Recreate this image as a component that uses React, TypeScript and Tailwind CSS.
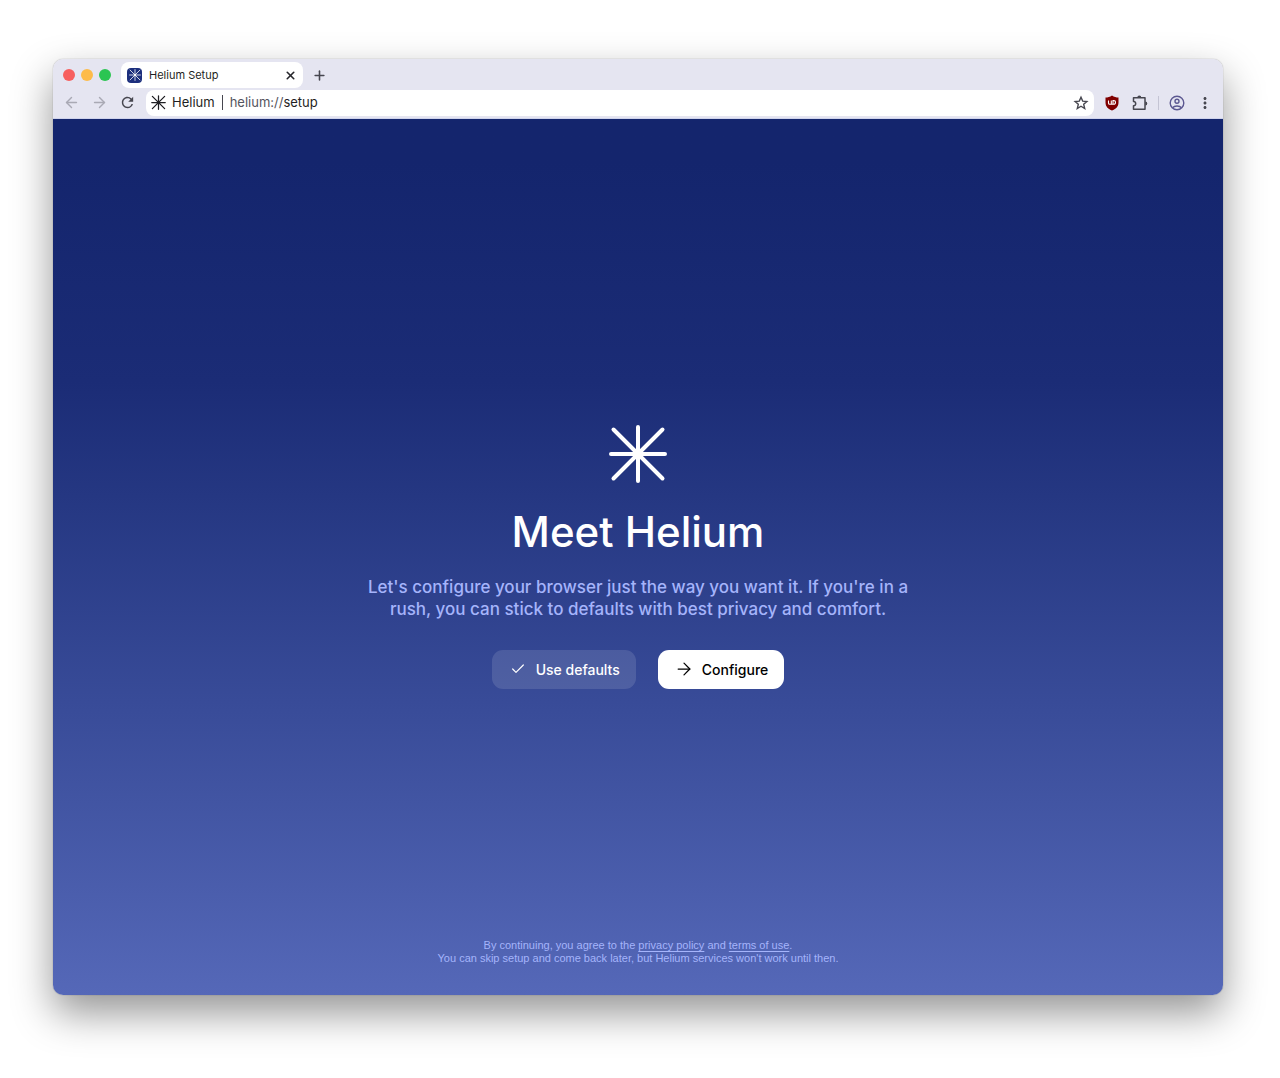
import React from "react";
import { ArrowLeft, ArrowRight, Check, Plus, X } from "lucide-react";
import { MdRefresh, MdMoreVert } from "react-icons/md";

function Burst({ className, width = 4 }: { className: string; width?: number }) {
  return (
    <svg viewBox="0 0 60 60" className={className} fill="none" stroke="currentColor" strokeWidth={width} strokeLinecap="round" aria-hidden="true">
      <path d="M30 3V57M3 30H57M5.500 5.500L54.500 54.500M54.500 5.500L5.500 54.500" />
      <circle cx="30" cy="30" r="5" fill="currentColor" stroke="none" />
    </svg>
  );
}

function Shield() {
  return (
    <svg viewBox="0 0 16 16" className="size-4" aria-hidden="true">
      <path d="M8 .5C6 2 3.600 2.500 1.500 2.500V7.500C1.500 12 4.500 14 8 15.500C11.500 14 14.500 12 14.500 7.500V2.500C12.400 2.500 10 2 8 .5Z" fill="#800000" />
      <path d="M4.500 5.500V8Q4.500 9.300 5.800 9.300H7.300V5.500M7.300 9.300H9.500Q11.500 9.300 11.500 7.400T9.500 5.500H9V9" fill="none" stroke="#fff" strokeWidth="1.100" />
    </svg>
  );
}

function Star() {
  return (
    <svg viewBox="0 0 16 16" className="size-4" fill="none" stroke="currentColor" strokeWidth="1.400" strokeLinejoin="miter" aria-hidden="true">
      <path d="M8 2.200L9.700 6.100L13.900 6.500L10.700 9.300L11.700 13.500L8 11.200L4.300 13.500L5.300 9.300L2.100 6.500L6.300 6.100Z" />
    </svg>
  );
}

function Puzzle() {
  return (
    <svg viewBox="0 0 16 16" className="size-4" aria-hidden="true">
      <path d="M1.500 2.800H13V14.200H1.500V10.800A2.200 2.200 0 0 0 1.500 6.400Z" fill="none" stroke="currentColor" strokeWidth="1.500" strokeLinejoin="round" />
      <path d="M5.300 2.600A2 2 0 0 1 9.300 2.600ZM13.300 6.500A2 2 0 0 1 13.300 10.500Z" fill="currentColor" />
    </svg>
  );
}

function Profile() {
  return (
    <svg viewBox="0 0 16 16" className="size-4" fill="none" stroke="currentColor" strokeWidth="1.400" aria-hidden="true">
      <circle cx="8" cy="8" r="6.800" />
      <circle cx="8" cy="6.300" r="2" />
      <path d="M3.500 12.800C5.500 10.400 10.500 10.400 12.500 12.800" />
    </svg>
  );
}

function BrowserBar() {
  return (
    <header className="bg-[#e5e5f1] text-[#46464f]">
      <div className="flex h-[30px] items-center pt-[2px]">
        <div className="flex items-center gap-[6px] px-[10px]">
          <button aria-label="Close window" className="size-3 rounded-full bg-[#f75f5e]" />
          <button aria-label="Minimize window" className="size-3 rounded-full bg-[#fdbb4a]" />
          <button aria-label="Zoom window" className="size-3 rounded-full bg-[#2bc552]" />
        </div>
        <div className="flex h-[26px] w-[182px] items-center rounded-lg bg-white px-[6px]">
          <span className="flex size-[15px] items-center justify-center rounded-[4px] bg-[#1c2f7d] text-white">
            <Burst className="size-3" width={4} />
          </span>
          <span className="ml-[7px] flex-1 text-[11px] text-[#1f1f23]">Helium Setup</span>
          <button aria-label="Close tab" className="text-[#26262b]">
            <X className="size-[13px]" strokeWidth={3} />
          </button>
        </div>
        <button aria-label="New tab" className="flex h-[26px] w-8 items-center justify-center">
          <Plus className="size-[15px]" strokeWidth={2.500} />
        </button>
      </div>
      <div className="flex h-[30px] items-center border-b border-[#cfd3ec] px-[10px] pb-[2px]">
        <div className="flex items-center gap-[11px]">
          <button aria-label="Back" className="text-[#a9a9b4]"><ArrowLeft className="size-[17px]" /></button>
          <button aria-label="Forward" className="text-[#a9a9b4]"><ArrowRight className="size-[17px]" /></button>
          <button aria-label="Reload"><MdRefresh className="size-[17px]" /></button>
        </div>
        <div className="ml-[10px] flex h-[26px] min-w-0 flex-1 items-center rounded-lg bg-white px-[5px] text-[13px] text-[#1f1f23]">
          <Burst className="size-[15px]" width={5} />
          <span className="ml-[6px]">Helium</span>
          <span className="mx-[7px] h-[15px] w-px bg-[#46464f]" />
          <label htmlFor="address" className="text-[#55555e]">helium://</label>
          <input id="address" defaultValue="setup" className="min-w-0 flex-1 bg-transparent outline-none" />
          <button aria-label="Bookmark" className="text-[#46464f]"><Star /></button>
        </div>
        <div className="ml-[10px] flex items-center gap-3">
          <button aria-label="uBlock Origin"><Shield /></button>
          <button aria-label="Extensions"><Puzzle /></button>
        </div>
        <span className="mx-[10px] h-[14px] w-px bg-[#c4c4d4]" />
        <div className="flex items-center gap-3">
          <button aria-label="Profile" className="text-[#5c5891]"><Profile /></button>
          <button aria-label="Menu" className="flex w-4 justify-center"><MdMoreVert className="size-[18px] shrink-0" /></button>
        </div>
      </div>
    </header>
  );
}

export default function App() {
  return (
    <div className="flex min-h-screen bg-white pt-[59px] pr-[57px] pb-[83px] pl-[53px] font-['Inter',sans-serif]">
      <div className="flex min-w-0 flex-1 flex-col overflow-hidden rounded-[10px] shadow-[0_0_1px_rgba(0,0,0,0.5),0_18px_40px_rgba(0,0,0,0.42)]">
        <BrowserBar />
        <main className="grid flex-1 grid-rows-[1fr_auto_1fr] justify-items-center bg-linear-to-b from-[#14256d] from-5% via-[#1b2c76] via-30% to-[#5568b8] text-center">
          <section className="row-start-2 flex flex-col items-center pb-[2px]">
            <Burst className="size-[60px] text-white" />
            <h1 className="mt-5 text-[42px] leading-[56px] font-medium text-white">Meet Helium</h1>
            <p className="mt-4 max-w-[580px] text-[17px] leading-[22px] font-medium text-[#a5b4fb]">
              Let's configure your browser just the way you want it. If you're in a{" "}<br />
              rush, you can stick to defaults with best privacy and comfort.
            </p>
            <div className="mt-[30px] flex gap-[22px] text-[14px] font-medium">
              <button className="flex h-[39px] items-center gap-2 rounded-[11px] bg-white/12 px-4 text-white">
                <Check className="size-5 p-[2px]" strokeWidth={1.800} />Use defaults
              </button>
              <button className="flex h-[39px] items-center gap-2 rounded-[11px] bg-white px-4 text-black">
                <ArrowRight className="size-5" strokeWidth={1.500} />Configure
              </button>
            </div>
          </section>
          <footer className="row-start-3 self-end pb-[30px] font-['Liberation_Sans',Arial,sans-serif] text-[11px] leading-[13px] text-[#a5b4fb]">
            <p>By continuing, you agree to the <a href="#privacy" className="underline underline-offset-2">privacy policy</a> and <a href="#terms" className="underline underline-offset-2">terms of use</a>.</p>
            <p>You can skip setup and come back later, but Helium services won't work until then.</p>
          </footer>
        </main>
      </div>
    </div>
  );
}
